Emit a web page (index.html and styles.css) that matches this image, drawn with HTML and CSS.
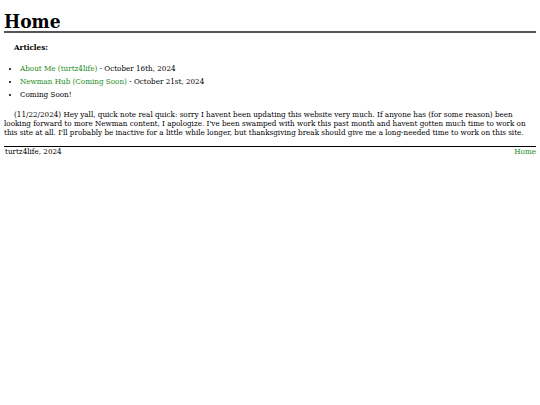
FILE: index.html
```html
<!DOCTYPE html>
<html>
<head>
<meta charset="utf-8">
<link rel="stylesheet" href="styles.css">
</head>
<body>
<header class="top">
<h1 class="title">Home</h1>
</header>
<main class="content">
<h4 class="subhead">Articles:</h4>
<ul class="articles">
<li><a href="#">About Me (turtz4life)</a> - October 16th, 2024</li>
<li><a href="#">Newman Hub (Coming Soon)</a> - October 21st, 2024</li>
<li>Coming Soon!</li>
</ul>
<p class="note">(11/22/2024) Hey yall, quick note real quick: sorry I havent been updating this website very much. If anyone has (for some reason) been looking forward to more Newman content, I apologize. I've been swamped with work this past month and havent gotten much time to work on this site at all. I'll probably be inactive for a little while longer, but thanksgiving break should give me a long-needed time to work on this site.</p>
</main>
<footer class="foot">
<span>turtz4life, 2024</span>
<a href="#">Home</a>
</footer>
</body>
</html>
```
FILE: styles.css
```css
body {
  margin: 4px;
  font-family: "DejaVu Serif Condensed", "DejaVu Serif", serif;
  font-stretch: condensed;
  font-size: 8px;
  line-height: 9px;
  color: #000;
  background: #fff;
}
a { color: #228b22; text-decoration: none; }
.top { border-bottom: 2px solid #555; padding-top: 8px; }
.title { margin: 0; font-size: 19px; line-height: 19px; }
.subhead { margin: 10px 0 0 10px; font-size: 8px; }
.articles { margin: 10px 0 0 0; padding-left: 16px; }
.articles li { line-height: 13px; }
.note { margin: 9px 0 0 0; text-indent: 10px; }
.foot { margin-top: 9px; border-top: 1px solid #000; display: flex; justify-content: space-between; padding: 0 0 0 1px; }
```
